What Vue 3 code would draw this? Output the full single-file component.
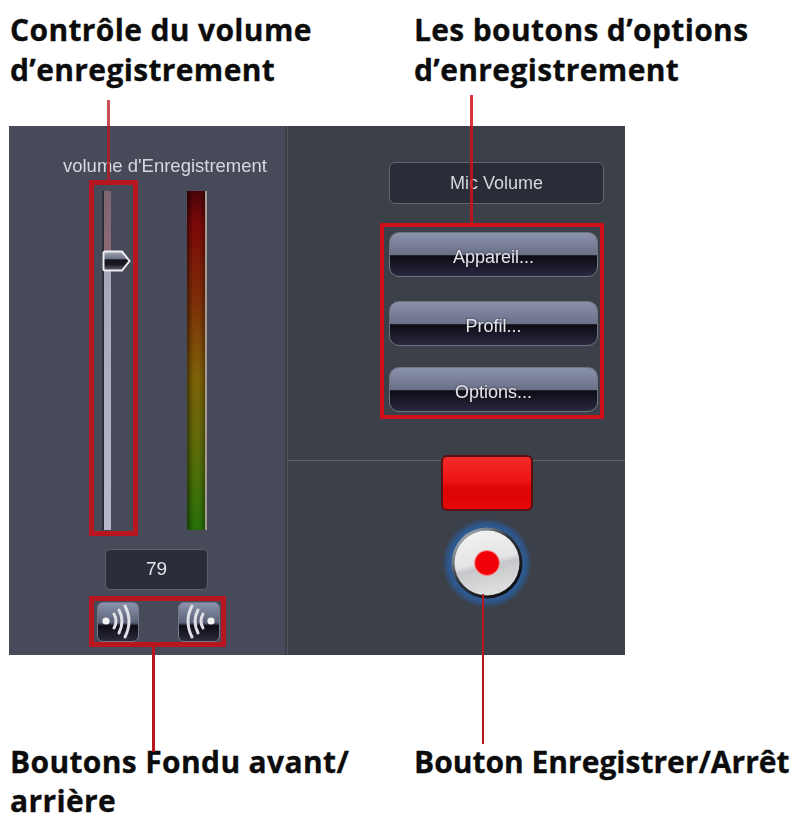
<script setup>
const actions = ['Appareil...', 'Profil...', 'Options...']
</script>

<template>
  <div class="page">
    <header class="titles">
      <h2>Contrôle du volume<br />d’enregistrement</h2>
      <h2>Les boutons d’options<br />d’enregistrement</h2>
    </header>

    <main class="panel">
      <section class="left">
        <div class="rec-label">volume d'Enregistrement</div>
        <div class="levels">
          <div class="slider-box">
            <div class="track">
              <svg class="thumb" viewBox="0 0 29 22" width="29" height="22">
                <defs>
                  <linearGradient id="thumbFill" x1="0" y1="0" x2="0" y2="1">
                    <stop offset="0" stop-color="#a4a7b6" />
                    <stop offset="0.38" stop-color="#6f7286" />
                    <stop offset="0.44" stop-color="#14121c" />
                    <stop offset="0.68" stop-color="#1a1824" />
                    <stop offset="1" stop-color="#6a6878" />
                  </linearGradient>
                </defs>
                <path d="M3 1.5H20L27.5 11L20 20.5H3Q1.5 20.5 1.5 19V3Q1.5 1.5 3 1.5Z" fill="url(#thumbFill)" stroke="#eeeef2" stroke-width="2" />
              </svg>
            </div>
          </div>
          <div class="meter"></div>
        </div>
        <div class="value">79</div>
        <div class="fade-box">
          <button class="fade-btn" aria-label="Fondu avant">
            <svg viewBox="0 0 42 40" width="42" height="40">
              <circle cx="9" cy="19" r="3.6" fill="#f4f4f4" />
              <path d="M17 12Q21 19 17 26M22 8Q28 19 22 31M28 4Q36 19 28 35" fill="none" stroke="#e0e1e6" stroke-width="3" stroke-linecap="round" />
            </svg>
          </button>
          <button class="fade-btn" aria-label="Fondu arrière">
            <svg viewBox="0 0 42 40" width="42" height="40">
              <circle cx="33" cy="19" r="3.6" fill="#f4f4f4" />
              <path d="M25 12Q21 19 25 26M20 8Q14 19 20 31M14 4Q6 19 14 35" fill="none" stroke="#e0e1e6" stroke-width="3" stroke-linecap="round" />
            </svg>
          </button>
        </div>
      </section>

      <section class="right">
        <div class="right-top">
          <div class="mic">Mic Volume</div>
          <div class="actions">
            <button v-for="a in actions" :key="a" class="action">{{ a }}</button>
          </div>
        </div>
        <div class="right-bottom">
          <div class="red-led"></div>
          <svg class="record" viewBox="0 0 90 90" width="90" height="90">
            <defs>
              <radialGradient id="halo" cx="0.5" cy="0.5" r="0.5">
                <stop offset="0.74" stop-color="#2f5f9e" />
                <stop offset="0.88" stop-color="#2e5484" />
                <stop offset="1" stop-color="#3c4048" />
              </radialGradient>
              <linearGradient id="ring" x1="0.15" y1="0.1" x2="0.85" y2="0.9">
                <stop offset="0" stop-color="#a8aeb8" />
                <stop offset="0.4" stop-color="#34383f" />
                <stop offset="1" stop-color="#08090c" />
              </linearGradient>
              <linearGradient id="disc" x1="0" y1="0" x2="0.25" y2="1">
                <stop offset="0" stop-color="#f4f4f4" />
                <stop offset="0.56" stop-color="#e4e4e6" />
                <stop offset="0.64" stop-color="#c6c7ca" />
                <stop offset="1" stop-color="#dcdddd" />
              </linearGradient>
            </defs>
            <circle cx="45" cy="45" r="45" fill="url(#halo)" />
            <circle cx="45" cy="45" r="35.5" fill="url(#ring)" />
            <circle cx="45" cy="45" r="32.5" fill="url(#disc)" />
            <circle cx="45" cy="45" r="12.5" fill="#f20008" stroke="#f79090" stroke-width="1" />
          </svg>
        </div>
      </section>
    </main>

    <footer class="titles bottom">
      <h2>Boutons Fondu avant/<br />arrière</h2>
      <h2 class="last">Bouton Enregistrer/Arrêt</h2>
    </footer>

    <i class="lead lead-volume"></i>
    <i class="lead lead-options"></i>
    <i class="lead lead-fade"></i>
    <i class="lead lead-record"></i>
  </div>
</template>

<style>
html, body { margin: 0; background: #fff; }
</style>

<style scoped>
.page {
  position: relative;
  width: 796px;
  height: 820px;
  overflow: hidden;
  background: #fff;
  font-family: "Liberation Sans", Arial, sans-serif;
}
.titles {
  display: grid;
  grid-template-columns: 404px 1fr;
  height: 126px;
  padding: 10px 0 0 10px;
  box-sizing: border-box;
}
.titles h2 {
  margin: 0;
  font-family: "Open Sans", sans-serif;
  font-size: 30px;
  line-height: 40px;
  font-weight: 700;
  color: #0c0c0c;
  white-space: nowrap;
  letter-spacing: 0.35px;
  -webkit-text-stroke: 0.3px #0c0c0c;
}
.titles h2.last { letter-spacing: 0; }
.bottom { height: 165px; padding-top: 87px; }
.bottom h2 { line-height: 39px !important; }
.panel {
  display: grid;
  grid-template-columns: 278px 338px;
  width: 616px;
  height: 529px;
  margin-left: 9px;
  filter: blur(0.6px);
}
.left {
  display: flex;
  flex-direction: column;
  align-items: flex-start;
  padding-top: 29px;
  box-sizing: border-box;
  background: #474a58;
  border-right: 2px solid #3a3c46;
}
.rec-label {
  align-self: flex-end;
  margin-right: 18px;
  height: 22px;
  line-height: 22px;
  font-size: 18.5px;
  color: #d6dae0;
  white-space: nowrap;
}
.levels { display: flex; align-items: flex-start; margin-top: 3px; height: 356px; }
.slider-box {
  width: 49px;
  height: 356px;
  margin-left: 80px;
  box-sizing: border-box;
  border: 5px solid #b8161e;
  padding: 6px 0 0 8px;
}
.track {
  position: relative;
  width: 9px;
  height: 339px;
  border-left: 2px solid #2a2c36;
  box-sizing: border-box;
  background: linear-gradient(to bottom, #7e6670 0, #8e6a76 22%, #a8a8bc 24%, #b8b8ca 100%);
}
.thumb { position: absolute; left: -2px; top: 59px; }
.meter {
  width: 20px;
  height: 339px;
  margin: 11px 0 0 49px;
  box-sizing: border-box;
  border-right: 2px solid #a89c92;
  background:
    linear-gradient(to right, rgba(0, 0, 0, 0.45) 0, rgba(0, 0, 0, 0) 35%, rgba(0, 0, 0, 0) 70%, rgba(0, 0, 0, 0.3) 100%),
    linear-gradient(to bottom, #4a0408 0, #7c0808 10%, #7e3408 35%, #7e6008 55%, #586c08 78%, #267008 100%);
}
.value {
  width: 103px;
  height: 41px;
  margin: 13px 0 0 96px;
  box-sizing: border-box;
  border: 1px solid #5c5f6c;
  border-radius: 5px;
  background: #2b2e3a;
  color: #e2e4e8;
  font-size: 19px;
  line-height: 38px;
  text-align: center;
}
.fade-box {
  display: flex;
  justify-content: space-between;
  align-items: center;
  width: 137px;
  height: 51px;
  margin: 6px 0 0 80px;
  padding: 0 1px 0 3px;
  box-sizing: border-box;
  border: 5px solid #b8161e;
}
.fade-btn {
  width: 42px;
  height: 40px;
  padding: 0;
  border: 1px solid #74788a;
  border-radius: 6px;
  background: linear-gradient(to bottom, #8a93ad 0, #5c6278 52%, #0e0d16 60%, #2c2a3c 100%);
  overflow: hidden;
}
.fade-btn svg { display: block; margin: -1px; }
.right {
  display: flex;
  flex-direction: column;
  background: #3c4048;
  box-shadow: inset 1px 0 0 #50535c;
}
.right-top {
  display: flex;
  flex-direction: column;
  align-items: flex-start;
  height: 335px;
  padding-top: 36px;
  box-sizing: border-box;
  border-bottom: 1px solid #5d6169;
}
.mic {
  width: 215px;
  height: 42px;
  margin-left: 102px;
  box-sizing: border-box;
  border: 1px solid #62656f;
  border-radius: 6px;
  background: #2a2d38;
  color: #d6d8dc;
  font-size: 18px;
  line-height: 40px;
  text-align: center;
}
.actions {
  display: flex;
  flex-direction: column;
  gap: 21px;
  width: 224px;
  height: 196px;
  margin: 19px 0 0 93px;
  padding: 5px 0 0 5px;
  box-sizing: border-box;
  border: 4px solid #d00f1a;
}
.action {
  width: 209px;
  height: 45px;
  padding: 6px 0 0;
  border: 1px solid #70747e;
  border-radius: 10px;
  background: linear-gradient(to bottom, #8a92ab 0, #6b7088 50%, #0d0c14 53%, #2a2840 100%);
  color: #e4e6ea;
  font-family: "Liberation Sans", Arial, sans-serif;
  font-size: 18px;
  text-shadow: 0 0 2px #20202a;
}
.action:nth-child(2) { margin-top: 3px; }
.right-bottom {
  position: relative;
  display: flex;
  flex-direction: column;
  align-items: flex-start;
  margin-top: -6px;
}
.red-led {
  width: 92px;
  height: 56px;
  margin-left: 154px;
  box-sizing: border-box;
  border: 2px solid #5a1010;
  border-radius: 6px;
  background: linear-gradient(to bottom, #f22a2a 0, #ee1414 45%, #dc0404 62%, #e60808 100%);
}
.record { display: block; margin: 7px 0 0 155px; }
.lead { position: absolute; display: block; background: #b8161e; }
.lead-volume { left: 107px; top: 100px; width: 3px; height: 80px; background: rgba(184, 22, 30, 0.75); }
.lead-options { left: 470px; top: 95px; width: 3px; height: 128px; background: rgba(208, 15, 26, 0.85); }
.lead-fade { left: 152px; top: 647px; width: 3px; height: 105px; }
.lead-record { left: 482px; top: 594px; width: 2px; height: 150px; }
</style>
